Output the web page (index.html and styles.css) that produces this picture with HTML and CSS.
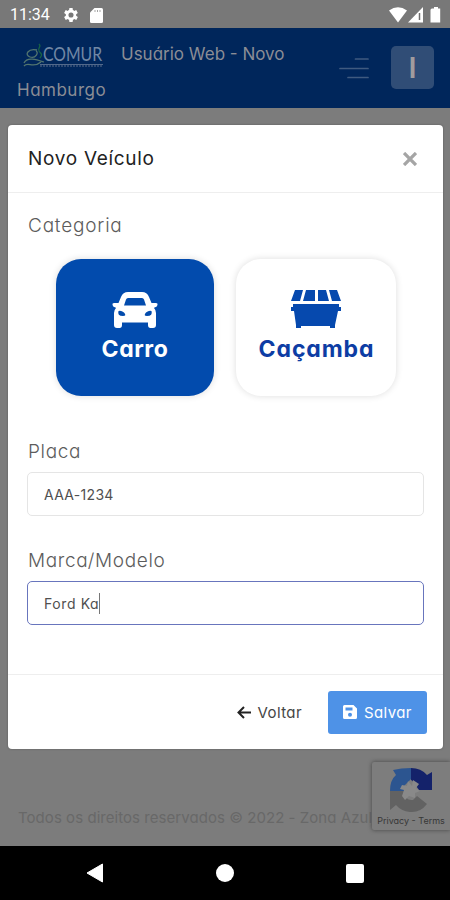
FILE: index.html
```html
<!DOCTYPE html>
<html lang="pt-BR">
<head>
<meta charset="utf-8">
<meta name="viewport" content="width=device-width, initial-scale=1">
<title>Novo Veículo</title>
<link rel="stylesheet" href="styles.css">
</head>
<body>
<div class="screen">
  <div class="status">
    <span class="clock">11:34</span>
    <svg class="gear" width="16" height="16" viewBox="3 2 20 20"><path fill="#fff" d="M19.400 13a7.500 7.500 0 0 0 0-2l2.100-1.600-2-3.500-2.500 1a7.300 7.300 0 0 0-1.700-1L15 3.300h-4l-.4 2.600a7.300 7.300 0 0 0-1.700 1l-2.500-1-2 3.500L6.600 11a7.500 7.500 0 0 0 0 2l-2.200 1.600 2 3.500 2.500-1a7.300 7.300 0 0 0 1.700 1l.4 2.600h4l.4-2.600a7.300 7.300 0 0 0 1.700-1l2.500 1 2-3.500zM13 15.200a3.200 3.200 0 1 1 0-6.400 3.200 3.200 0 0 1 0 6.400z"/></svg>
    <svg class="card" width="13" height="15" viewBox="0 0 13 15"><path fill="#fff" d="M4.500 0H11.500Q13 0 13 1.500V13.500Q13 15 11.500 15H1.500Q0 15 0 13.500V4.500z"/><path stroke="#a5a5a5" stroke-width="1" d="M5 2v2M7.500 2v2M10 2v2"/></svg>
    <svg class="signals" width="53" height="16" viewBox="0 0 53 16"><path fill="#fff" d="M0 3.500Q9-3 18 3.500L9 15.500z"/><path fill="#fff" d="M34 0V15.500H19z"/><path stroke="#6d6d6d" stroke-width="1.500" d="M30.500 6v7"/><path fill="#fff" d="M43 1.500h2V0h4v1.500h2.200V15.500H41.500V3q0-1.500 1.500-1.500z"/></svg>
  </div>

  <header class="topbar">
    <div class="brand">
      <div class="brand-row">
        <svg class="logo" width="82" height="28" viewBox="0 0 82 28">
          <g fill="none" stroke-width="1.300"><path stroke="#52756f" d="M14 7C5 5 1 12 7 14s9-5 6-6M1 20c3-7 14-3 20-1M1 23c4-5 9 3 17-4"/><path stroke="#176345" d="M16 1c3 3-2 4 0 7s4 3 1 7"/></g>
          <text class="logo-name" x="20" y="18" textLength="59" lengthAdjust="spacingAndGlyphs">COMUR</text>
          <path stroke="#52698b" stroke-width="1" d="M17 21.500h63"/><path stroke="#3c557c" stroke-width="1.500" stroke-dasharray="2 1" d="M17 23h63"/>
        </svg>
        <span class="brand-text">Usuário Web - Novo</span>
      </div>
      <span class="brand-text city">Hamburgo</span>
    </div>
    <svg class="menu" width="30" height="23" viewBox="0 0 30 23"><path stroke="#3f5a80" stroke-width="1.700" stroke-linecap="round" d="M16.500 2H29M1 11.500H29M9 20.500H29"/></svg>
    <div class="avatar">I</div>
  </header>

  <main class="page">
    <p class="footer">Todos os direitos reservados © 2022 - Zona Azul</p>
    <div class="captcha">
      <svg width="44" height="46" viewBox="0 0 44 46"><path fill="#14226a" d="M22 0Q32 0 38 7L43 4V22H30L25 15Q23 12 22 12z"/><path fill="#2c5590" d="M22 0V11L15 18V23H1Q1 12 7 7L4 2Q12 0 22 0z"/><path fill="#626262" d="M1 23H15Q16 33 24 32L28 28L38 36Q31 45 21 44Q12 43 7 37L1 42z"/><path fill="#898989" d="M19 13L23 18 24 12 30 16 27 20 31 23 26 25 26 30 20 28 16 32 13 28 15 22 11 21 13 17 18 18z"/></svg>
      <span class="captcha-text">Privacy - Terms</span>
    </div>
    <section class="modal">
      <div class="modal-head"><h1>Novo Veículo</h1>
        <svg class="close" width="14" height="14" viewBox="0 0 14 14"><path stroke="#a5a5a5" stroke-width="3.300" d="M1 1l12 12M13 1L1 13"/></svg>
      </div>
      <div class="modal-body">
        <label class="label cat">Categoria</label>
        <div class="options">
          <div class="option selected">
            <svg class="option-icon" width="46" height="36" viewBox="0 0 46 36"><path fill="#fff" fill-rule="evenodd" d="M16 0H30Q35 0 37 5L39.500 11H44Q46 11 45.500 13T42.500 15.500L42 16Q44 18 44 21V33Q44 36 41 36H38.500Q36 36 36 33V30.500H10V33Q10 36 7.500 36H5Q2 36 2 33V21Q2 18 4 16L3.500 15.500Q1 15 .5 13T2 11H6.500L9 5Q11 0 16 0zM16 6Q14.500 6 14 7.500L12 13.500H34L32 7.500Q31.500 6 30 6zM6.500 19Q5 24 11 24 15 24 12 20.500 9 18 6.500 19zM39.500 19Q41 24 35 24 31 24 34 20.500 37 18 39.500 19z"/></svg>
            <span class="option-text carro">Carro</span>
          </div>
          <div class="option">
            <svg class="option-icon" width="52" height="40" viewBox="0 0 52 40"><path fill="#0649ae" d="M5 1H13L10 12H1zM16 1H25V12H13zM28 1H36L39 12H28zM39 1H47L51 12H42zM3 15H49V18H51V22H48L45 36V39H40V37H11V39H6V36L4 22H1V18H3z"/></svg>
            <span class="option-text cacamba">Caçamba</span>
          </div>
        </div>
        <label class="label placa">Placa</label>
        <div class="input"><span class="plate">AAA-1234</span></div>
        <label class="label marca">Marca/Modelo</label>
        <div class="input focused"><span class="model">Ford Ka</span><i class="caret"></i></div>
      </div>
      <div class="modal-foot">
        <div class="back"><svg width="14" height="13" viewBox="0 0 14 13"><path fill="none" stroke="#222" stroke-width="2" d="M7 1L1.500 6.500 7 12M2 6.500H14"/></svg><span class="voltar">Voltar</span></div>
        <div class="save"><svg width="14" height="14" viewBox="0 0 14 14"><path fill="#fff" fill-rule="evenodd" d="M1.500 0H10.500L14 3.500V12.500Q14 14 12.500 14H1.500Q0 14 0 12.500V1.500Q0 0 1.500 0zM2.500 2.500V5.500H9.500V2.500zM7 7.700A2 2 0 1 0 7 11.700 2 2 0 1 0 7 7.700z"/></svg><span class="salvar">Salvar</span></div>
      </div>
    </section>
  </main>

  <nav class="navbar">
    <svg width="18" height="20" viewBox="0 0 18 20"><path fill="#fff" stroke="#fff" stroke-linejoin="round" d="M1 10L16.500 1V19z"/></svg>
    <span class="home"></span>
    <span class="recent"></span>
  </nav>
</div>
</body>
</html>
```
FILE: styles.css
```css
* { box-sizing: border-box; }
body { margin: 0; font-family: Inter, "Liberation Sans", sans-serif; font-feature-settings: "cv11" 1; }
.screen { width: 450px; height: 900px; display: flex; flex-direction: column; overflow: hidden; }

.status { height: 28px; flex: none; background: #787878; display: flex; align-items: center; padding: 2px 8px 0 10px; }
.clock { color: #fff; font: 400 16px/20px Roboto, sans-serif; width: 41px; }
.gear { margin-left: 12px; }
.card { margin-left: 11px; }
.signals { margin-left: auto; }

.topbar { height: 80px; flex: none; background: #00265b; display: flex; align-items: flex-start; padding: 8px 16px 0 17px; }
.brand { width: 290px; line-height: 37px; }
.brand-row { display: flex; height: 36px; }
.logo { flex: none; overflow: visible; margin: 7px 16px 0 6px; }
.logo-name { fill: #7188a5; font: 19px/20px Lato, sans-serif; }
.brand-text { color: #8b8d95; font-size: 17px; font-weight: 400; letter-spacing: 0; white-space: nowrap; }
.city { display: block; letter-spacing: 0.5px; }
.menu { margin: 21px 0 0 32px; }
.avatar { width: 43px; height: 43px; margin: 10px 0 0 auto; border-radius: 5px; background: #304d76; color: #a19c9e; font: 600 29px/43px Inter, sans-serif; text-align: center; }

.page { flex: 1; position: relative; background: #7c7c7c; padding: 698px 0 0 18px; }
.footer { margin: 0; font-size: 15px; line-height: 24px; color: #686868; white-space: nowrap; letter-spacing: 0.05px; }
.captcha { position: absolute; right: 0; top: 654px; width: 78px; height: 68px; background: #7d7d7d; box-shadow: 0 0 4px #444; border-radius: 2px 0 0 2px; display: flex; flex-direction: column; align-items: center; padding-top: 6px; }
.captcha-text { font-size: 9px; line-height: 14px; color: #373737; white-space: nowrap; }

.modal { position: absolute; left: 8px; top: 17px; width: 435px; height: 624px; background: #fff; border-radius: 4px; box-shadow: 0 0 2px #555; display: flex; flex-direction: column; }
.modal-head { height: 68px; flex: none; border-bottom: 1px solid #eee; display: flex; align-items: center; justify-content: space-between; padding: 0 26px 0 20px; }
h1 { margin: 0; font-size: 19px; font-weight: 400; color: #222; letter-spacing: 0.7px; }
.modal-body { flex: 1; padding: 18px 19px 0; }
.label { display: block; height: 28px; line-height: 29px; font-size: 19px; font-weight: 300; color: #5c5c5c; letter-spacing: 0.65px; padding-left: 1px; }
.cat { letter-spacing: 0.8px; }
.options { display: flex; gap: 22px; margin: 20px 0 41px 29px; }
.option { width: 160px; height: 137px; border-radius: 25px; box-shadow: 0 0 7px #ddd; color: #0d3da4; display: flex; flex-direction: column; align-items: center; padding-top: 30px; }
.selected { width: 158px; background: #024bad; color: #fff; padding-top: 33px; }
.option-text { font-size: 23px; line-height: 28px; font-weight: 700; margin-top: 6px; letter-spacing: 0.6px; }
.cacamba { letter-spacing: 0.9px; padding-left: 1px; }
.selected .option-text { margin-top: 7px; }
.input { height: 44px; margin-top: 7px; border: 1px solid #e5e5e5; border-radius: 5px; display: flex; align-items: center; padding-left: 16px; font-size: 14px; color: #505050; }
.plate { letter-spacing: 0.3px; }
.model { letter-spacing: 0.6px; }
.marca { margin-top: 30px; }
.focused { border-color: #6875bd; }
.caret { width: 1px; height: 21px; background: #777; }
.modal-foot { height: 75px; flex: none; border-top: 1px solid #eee; display: flex; align-items: center; justify-content: flex-end; gap: 26px; padding-right: 16px; }
.back, .save { display: flex; align-items: center; font-size: 15px; letter-spacing: 0.4px; }
.back { color: #454545; gap: 7px; }
.save { width: 99px; height: 43px; border-radius: 3px; background: #4e92e7; color: #fff; gap: 7px; padding-left: 15px; }

.navbar { height: 54px; flex: none; background: #000; display: flex; align-items: center; justify-content: space-between; padding: 0 86px; }
.home { width: 18px; height: 18px; border-radius: 50%; background: #fff; }
.recent { width: 18px; height: 19px; border-radius: 2px; background: #fff; }
```
